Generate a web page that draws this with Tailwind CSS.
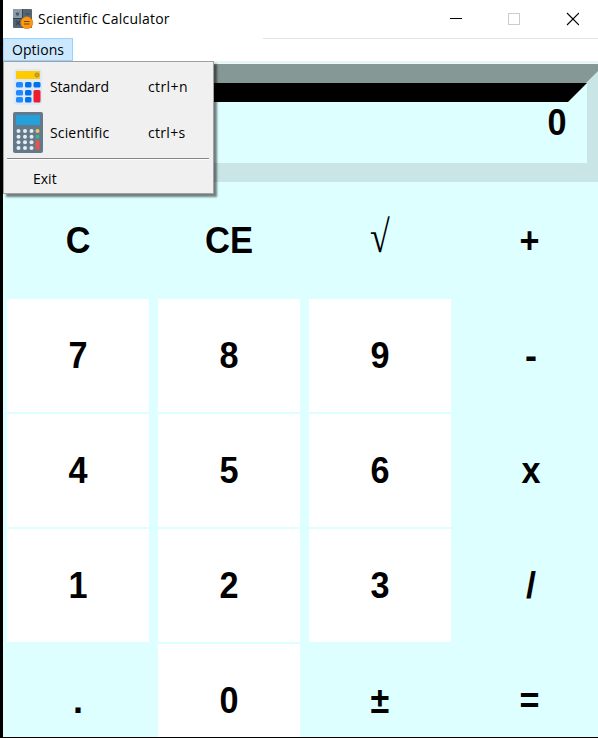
<!DOCTYPE html>
<html lang="en">
<head>
<meta charset="utf-8">
<title>Scientific Calculator</title>
<script src="https://cdn.jsdelivr.net/npm/@tailwindcss/browser@4"></script>
</head>
<body class="h-[738px] w-[598px] overflow-hidden bg-black font-['Open_Sans',sans-serif] text-black">
<div class="relative ml-[3px] flex h-[737px] w-[595px] flex-col overflow-hidden bg-[#deffff]">
  <header class="flex h-[38px] shrink-0 items-center bg-white">
    <svg class="ml-[9px] h-5 w-[22px] shrink-0" viewBox="0 0 22 20">
      <rect x="1" y="0" width="19" height="19" rx="1" fill="#546574"/>
      <rect x="1" y="0" width="9" height="9" fill="#8c9ba5"/>
      <path d="M10.5 0v19M1 9.5h19" stroke="#34434f"/>
      <path d="M13.5 5h4M4 12l4 4m0-4l-4 4" stroke="#34434f" stroke-width="1.1"/>
      <circle cx="5.5" cy="5" r="1.7" fill="#4a5a67"/>
      <circle cx="14.8" cy="13.7" r="6" fill="#ff9811" stroke="#d97a12" stroke-width=".7"/>
      <path d="M12 12.5h5.5M12 15h5.5" stroke="#70471c" stroke-width="1.2"/>
    </svg>
    <h1 class="ml-1 w-[420px] text-[14px] leading-5 tracking-[0.21px]"><span>Scientific Calculator</span></h1>
    <svg class="ml-[-11px] h-[14px] w-[132px] shrink-0" viewBox="0 0 132 14" fill="none" shape-rendering="crispEdges">
      <path d="M3 6.5h12" stroke="#000"/>
      <rect x="61.5" y="1.5" width="11" height="11" stroke="#ccc"/>
      <path d="M120 1l12 12M132 1l-12 12" stroke="#000" stroke-width="1.1" shape-rendering="auto"/>
    </svg>
  </header>
  <nav class="flex h-[23px] shrink-0 items-start bg-white">
    <div class="h-[23px] w-[70px] border border-[#99d1ff] bg-[#cce8ff] pl-2 text-[14px] leading-[22px] tracking-[0.05px]">Options</div>
    <div class="ml-[190px] h-px flex-1 bg-[#e3e3e3]"></div>
  </nav>
  <div class="h-[3px] shrink-0 border-t-2 border-[#f0f0f0]"></div>
  <section class="relative h-[118px] shrink-0 bg-[#c9e5e5]">
    <svg class="absolute top-0 left-0 h-[118px] w-[595px]" viewBox="0 0 595 118">
      <path d="M0 0H595V7L583 19H0z" fill="#859895"/>
      <path d="M0 19H584V99H0z" fill="#deffff"/>
      <path d="M0 19H584L565 38H0z"/>
    </svg>
    <div class="relative pt-[39px] pr-[31px] text-right font-['Liberation_Sans',sans-serif] text-[36px] leading-10 font-bold"><span class="inline-block scale-x-[.95]">0</span></div>
  </section>
  <main class="ml-1 grid shrink-0 auto-rows-[113px] grid-cols-[142px_142px_142px_142px] gap-x-[9px] gap-y-[2px] pt-[2px] text-center font-['Liberation_Sans',sans-serif] text-[36px] leading-[114px] font-bold *:overflow-visible">
    <div><span class="inline-block scale-x-[.95]">C</span></div>
    <div><span class="inline-block scale-x-[.96]">CE</span></div>
    <div class="font-['Liberation_Serif',serif] font-normal"><span class="inline-block scale-y-[1.25] translate-y-[-4px]">√</span></div>
    <div><span class="inline-block scale-x-[.95] translate-x-[-1px]">+</span></div>
    <div class="bg-white"><span class="inline-block scale-x-[.95]">7</span></div>
    <div class="bg-white"><span class="inline-block scale-x-[.95]">8</span></div>
    <div class="bg-white"><span class="inline-block scale-x-[.95]">9</span></div>
    <div>-</div>
    <div class="bg-white"><span class="inline-block scale-x-[.95]">4</span></div>
    <div class="bg-white"><span class="inline-block scale-x-[.95]">5</span></div>
    <div class="bg-white"><span class="inline-block scale-x-[.95]">6</span></div>
    <div><span class="inline-block scale-x-[.95]">x</span></div>
    <div class="bg-white"><span class="inline-block scale-x-[.95]">1</span></div>
    <div class="bg-white"><span class="inline-block scale-x-[.95]">2</span></div>
    <div class="bg-white"><span class="inline-block scale-x-[.95]">3</span></div>
    <div>/</div>
    <div>.</div>
    <div class="bg-white"><span class="inline-block scale-x-[.95]">0</span></div>
    <div><span class="inline-block scale-x-[.95]">±</span></div>
    <div><span class="inline-block scale-x-[.95] translate-x-[-1px]">=</span></div>
  </main>
  <div class="absolute top-[61px] left-0 h-[133px] w-[211px] border border-[#a0a0a0] bg-[#f0f0f0] text-[14px] leading-5 shadow-[3px_3px_2px_rgba(0,0,0,.5)]">
    <div class="flex h-[48px] items-center pt-[2px] pl-[10px]">
      <svg class="h-9 w-7 shrink-0" viewBox="0 0 28 36">
        <rect x="0" y="0" width="28" height="36" rx="3" fill="#dbe9f9"/>
        <rect x="2" y="2" width="24" height="8" rx="1" fill="#ffca00"/>
        <circle cx="23" cy="6" r="2" fill="#d3a529" stroke="#a88b45"/>
        <g fill="#2588ff"><rect x="2" y="13" width="7" height="5.5" rx="1.5"/><rect x="2" y="21" width="7" height="5.5" rx="1.5"/><rect x="2" y="28" width="7" height="5.5" rx="1.5"/></g>
        <g fill="#0070ed"><rect x="11" y="13" width="6.5" height="5.5" rx="1.5"/><rect x="11" y="21" width="6.5" height="5.5" rx="1.5"/><rect x="11" y="28" width="6.5" height="5.5" rx="1.5"/><rect x="19.5" y="13" width="7" height="5.5" rx="1.5"/></g>
        <rect x="19.5" y="21" width="7" height="12.5" rx="1.5" fill="#ed1c2e"/>
      </svg>
      <span class="ml-2 w-[98px] tracking-[-0.1px]">Standard</span><span class="tracking-[.4px]">ctrl+n</span>
    </div>
    <div class="flex h-[45px] items-center pl-[9px]">
      <svg class="h-[41px] w-[30px] shrink-0" viewBox="0 0 30 41">
        <rect x="0" y="0" width="30" height="41" rx="2" fill="#64798a"/>
        <rect x="3" y="3" width="24" height="10" fill="#26a0da"/>
        <g fill="#e8edf2"><circle cx="5.5" cy="19" r="2"/><circle cx="12" cy="19" r="2"/><circle cx="18.5" cy="19" r="2"/><circle cx="5.5" cy="24.7" r="2"/><circle cx="12" cy="24.7" r="2"/><circle cx="18.5" cy="24.7" r="2"/><circle cx="5.5" cy="30.3" r="2"/><circle cx="12" cy="30.3" r="2"/><circle cx="18.5" cy="30.3" r="2"/><circle cx="5.5" cy="36" r="2"/><circle cx="12" cy="36" r="2"/><circle cx="18.5" cy="36" r="2"/></g>
        <circle cx="24.5" cy="19" r="2" fill="#efc75e"/><circle cx="24.5" cy="24.7" r="2" fill="#3cb39a"/><rect x="22.5" y="28" width="4" height="10" rx="1" fill="#e2574c"/>
      </svg>
      <span class="ml-[7px] w-[98px] tracking-[.15px]">Scientific</span><span class="tracking-[.3px]">ctrl+s</span>
    </div>
    <div class="mt-[3px] mr-1 ml-[3px] h-[2px] border-t border-[#858585] bg-white"></div>
    <div class="pt-[9px] pl-[29px]">Exit</div>
  </div>
</div>
</body>
</html>
